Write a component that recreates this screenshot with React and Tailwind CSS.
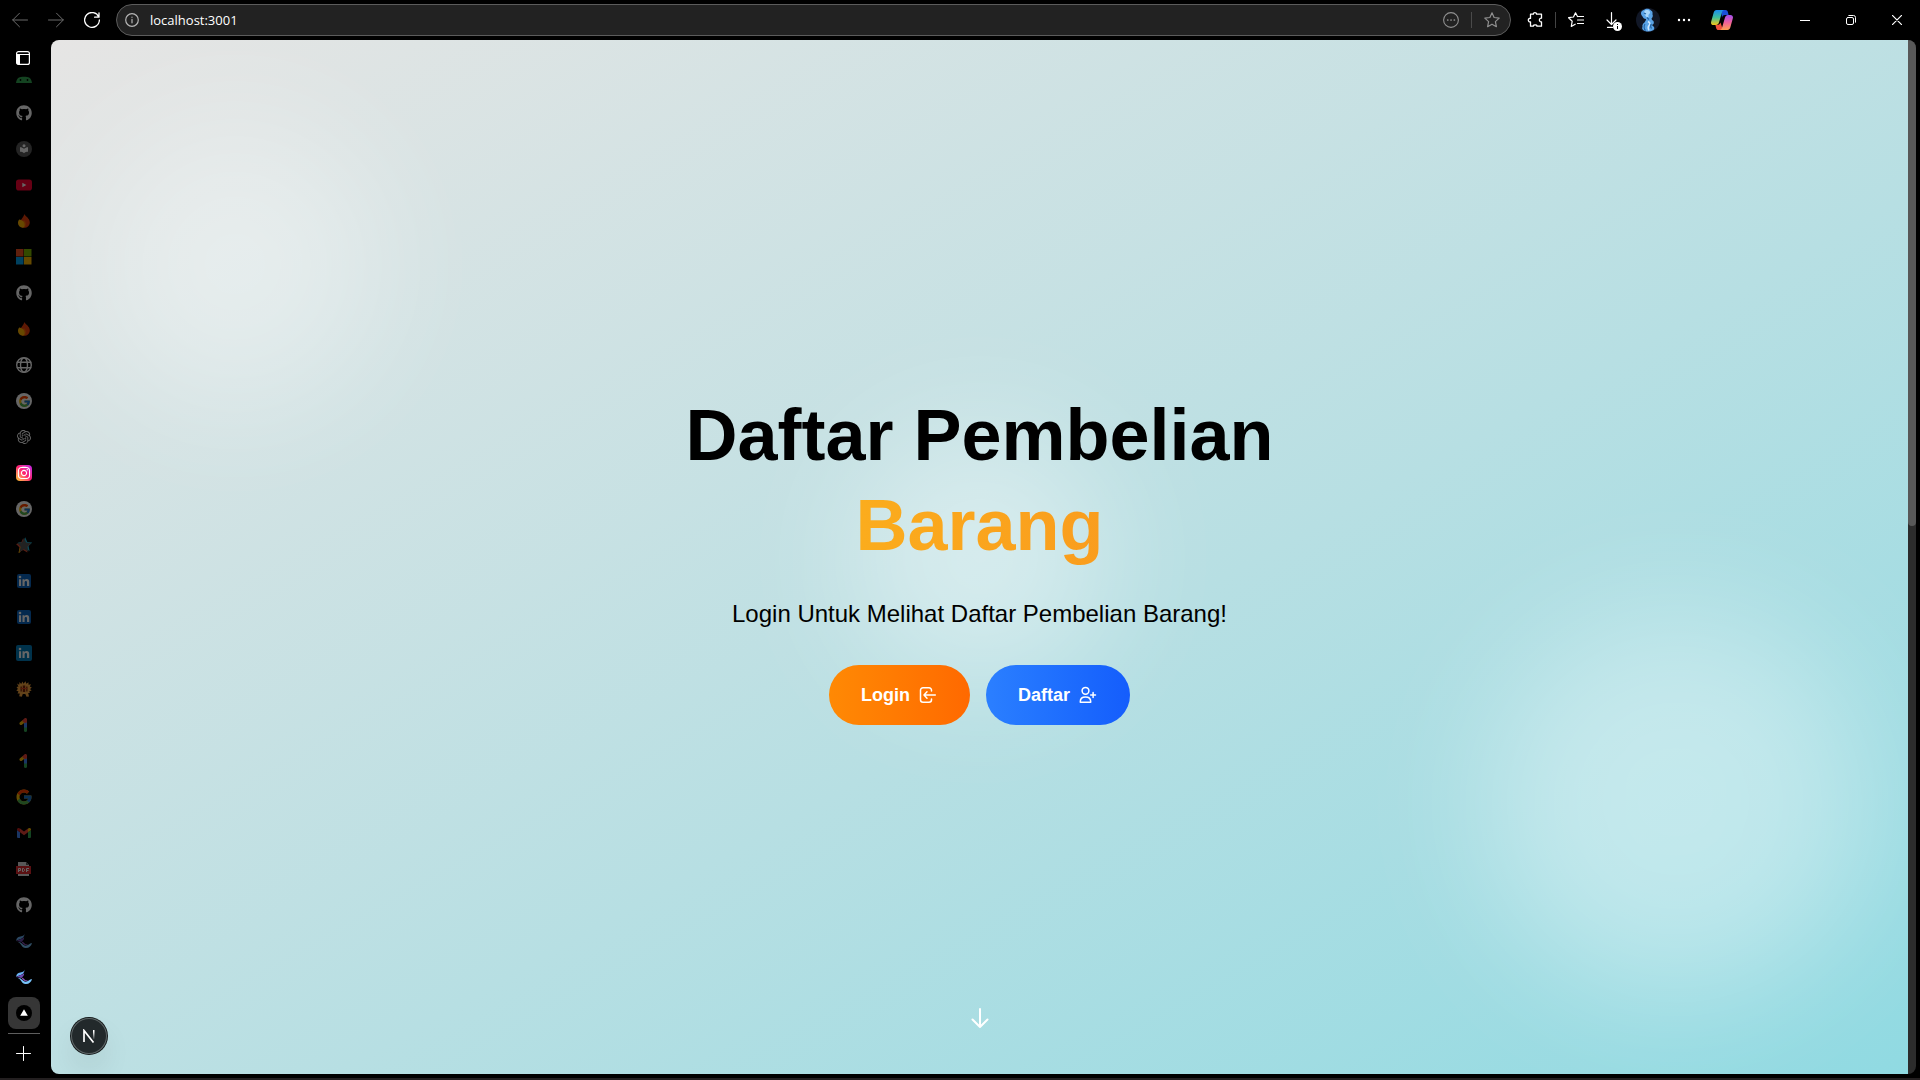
import React from "react";
import { FaGithub, FaInstagram } from "react-icons/fa";
import { FcGoogle } from "react-icons/fc";
import { SiOpenai } from "react-icons/si";

const Line = ({ size = 16, width = 1, box = 16, children, className = "" }) => (
  <svg
    width={size}
    height={size}
    viewBox={`0 0 ${box} ${box}`}
    fill="none"
    stroke="currentColor"
    strokeWidth={width}
    strokeLinecap="round"
    strokeLinejoin="round"
    className={className}
    aria-hidden="true"
  >
    {children}
  </svg>
);

const STAR = "M8 .8l2.1 4.7 5.1.6-3.8 3.5 1 5.1L8 12.2l-4.4 2.5 1-5.1L.8 6.1l5.1-.6z";

/* ---------- tab icons ---------- */

const Android = () => (
  <svg width="16" height="16" viewBox="0 0 16 16" aria-hidden="true">
    <path d="M0 14c.4-3 1.400-4.600 3-5.500C4.500 7.500 11.500 7.500 13 8.500c1.600.9 2.600 2.500 3 5.500z" fill="#34a853" />
    <circle cx="4.500" cy="11" r=".9" fill="#000" />
    <circle cx="11.500" cy="11" r=".9" fill="#000" />
  </svg>
);

const Reader = () => (
  <svg width="16" height="16" viewBox="0 0 16 16" aria-hidden="true">
    <circle cx="8" cy="8" r="8" fill="#5a5a5a" />
    <circle cx="8" cy="4.700" r="1.500" fill="#fff" />
    <path d="M4 6.200C5.500 6.200 7 6.800 8 7.800c1-1 2.500-1.600 4-1.600v4.600c-1.500 0-3 .5-4 1.400-1-.9-2.500-1.400-4-1.400z" fill="#fff" />
  </svg>
);

const Youtube = () => (
  <svg width="16" height="16" viewBox="0 0 16 16" aria-hidden="true">
    <rect x="0" y="2.500" width="16" height="11" rx="2.800" fill="#ff0033" />
    <path d="M6.300 5.800v4.400L10.400 8z" fill="#fff" />
  </svg>
);

const Flame = () => (
  <svg width="16" height="16" viewBox="0 0 16 16" aria-hidden="true">
    <path d="M8.200 1c.8 2 5.600 4.200 5.600 8.400 0 3-2.400 5.400-5.600 5.400-3 0-4.600-2.600-4.200-5.400.4-3 3.600-4.400 4.200-8.400z" fill="#e8400c" />
    <path d="M3.200 6.500c3.400.4 5.600 2.800 5.800 5.200 0 1.600-.6 2.400-1.600 2.900C4.200 14.900 2 12.800 2 10c0-1.500.5-2.500 1.200-3.500z" fill="#ffb300" />
    <path d="M8.400 14.700c2.300-2.200 2-6.200-.9-8 .4 3.200.3 5.600.9 8z" fill="#ff7a00" opacity=".6" />
  </svg>
);

const Windows = () => (
  <svg width="16" height="16" viewBox="0 0 16 16" aria-hidden="true">
    <path fill="#f25022" d="M0 0h7.500v7.500H0z" />
    <path fill="#7fba00" d="M8 0h7.500v7.500H8z" />
    <path fill="#00a4ef" d="M0 8h7.500v7.500H0z" />
    <path fill="#ffb900" d="M8 8h7.500v7.500H8z" />
  </svg>
);

const Globe = () => (
  <Line width={1.4} className="text-white">
    <circle cx="8" cy="8" r="7.300" />
    <ellipse cx="8" cy="8" rx="3.500" ry="7.300" />
    <path d="M1.300 5.300h13.400M1.300 10.700h13.400" />
  </Line>
);

const GoogleBadge = () => (
  <span className="flex size-4 items-center justify-center rounded-full bg-white">
    <FcGoogle size={13} />
  </span>
);

const Instagram = () => (
  <span className="flex size-4 items-center justify-center rounded-sm bg-linear-to-bl from-[#c010e8] via-[#ff1a70] to-[#ffc400] text-white">
    <FaInstagram size={14} />
  </span>
);

const Star = () => (
  <svg width="16" height="16" viewBox="0 0 16 16" aria-hidden="true">
    <path d={STAR} fill="#19b5d8" transform="translate(1.200 -.6)" />
    <path d={STAR} fill="#e2482d" transform="translate(-1 .8)" />
    <path d="M4 9.500l1.500 1.500-1.500 4.500-1.500.5z" fill="#f5b400" />
    <path d={STAR} fill="#555" />
  </svg>
);

const InGlyph = () => (
  <svg width="12" height="12" viewBox="0 0 12 12" fill="#fff" aria-hidden="true">
    <circle cx="2" cy="2" r="1.300" />
    <path d="M1 4.200h2.100V11H1zM4.500 4.200h2v1c.5-.8 1.200-1.200 2.200-1.200 1.800 0 2.500 1.200 2.500 3V11H9V7.500c0-1-.3-1.600-1.100-1.600S6.600 6.500 6.600 7.500V11H4.500z" />
  </svg>
);

const LinkedIn = () => (
  <span className="flex size-3.5 items-center justify-center rounded-xs bg-[#0a66c2]">
    <InGlyph />
  </span>
);

const LinkedInSquare = () => (
  <span className="flex size-4 items-center justify-center rounded-xs bg-[#007ebb]">
    <InGlyph />
  </span>
);

const Creature = () => (
  <svg width="16" height="16" viewBox="0 0 16 16" aria-hidden="true">
    <path
      d="M1 2.500l2.200 1.200L3.500 1l1.700 2L6.500.5l1 2.300L9.500.3l.8 2.500 2.200-1.600v2.500l2.500-.4-1.200 2.300 2 .8-1.700 1.500 1.500 1.800-2.200.2.400 2.200-1.600-.2.800 3.500-2.500.4-1.200-2.800H6.800l-1 2.800-2.600-.6.600-2.800-2.300.2 1-2L.3 9.500l1.600-1.600L.5 6l2-.6z"
      fill="#f5a540"
    />
    <path d="M4.500 5.500h1.300v5H4.500zM10.200 5.500h1.300v5h-1.300zM6.800 4.500h2.400v6.500H6.800z" fill="#7a2408" />
    <path d="M5 7.500h6" stroke="#d8401c" strokeWidth="1" />
  </svg>
);

const One = () => (
  <svg width="16" height="16" viewBox="0 0 16 16" fill="none" strokeLinecap="round" aria-hidden="true">
    <path d="M9.500 13.500V9" stroke="#34a853" strokeWidth="3" />
    <path d="M9.500 10.500V4" stroke="#4285f4" strokeWidth="3" strokeLinecap="butt" />
    <path d="M5 6.500l2.500-2" stroke="#fbbc04" strokeWidth="3" />
    <path d="M8 3.800l1.500-1.300v2" stroke="#ea4335" strokeWidth="3" strokeLinejoin="round" />
  </svg>
);

const Gmail = () => (
  <svg width="14" height="14" viewBox="0 0 14 14" aria-hidden="true">
    <path d="M0 4l3 2.200V12H1a1 1 0 0 1-1-1z" fill="#4285f4" />
    <path d="M14 4l-3 2.200V12h2a1 1 0 0 0 1-1z" fill="#34a853" />
    <path d="M3 2.500L7 5.600l4-3.100v3.700L7 9.300 3 6.200z" fill="#ea4335" />
    <path d="M0 3.500C0 1.800 1.800 1.500 3 2.500v3.700L0 4z" fill="#c5221f" />
    <path d="M14 3.500c0-1.700-1.800-2-3-1v3.700L14 4z" fill="#fbbc04" />
  </svg>
);

const Pdf = () => (
  <svg width="16" height="16" viewBox="0 0 16 16" aria-hidden="true">
    <path d="M2 1h8l3 3v11H2z" fill="#ddd" />
    <path d="M10 1l3 3h-3z" fill="#555" />
    <path d="M0 5h15v8H0z" fill="#e0282d" />
    <path
      d="M2.500 11V7.500h2v2h-2M6.500 7.500v3h1l1-1v-1l-1-1zM10.500 11V7.500h2.500M10.500 9.500h2"
      fill="none"
      stroke="#fff"
      strokeWidth="1"
    />
  </svg>
);

const Swirl = () => (
  <svg width="16" height="16" viewBox="0 0 16 16" fill="none" aria-hidden="true">
    <path d="M8.500.5C8 3.500 5 3.200 2.500 4 .8 4.600 0 6.500.4 8 2.500 5.500 8.500 7 8.500.5z" fill="#6bb2f5" />
    <path d="M.5 8.500C3 5.500 7 6.500 8 4c.6 3-1.500 3.500-2.500 5C3.500 8.500 2 8 .5 8.500z" fill="#6d4bb0" />
    <path d="M2 9c4-.5 5 4.500 8.500 3.500C13 11.800 13 10.500 16 10c-.6 3-3 5.200-6.500 5C5.500 14.800 5.500 10.500 2 9z" fill="#79c3fb" />
    <path d="M5.500 8.500c3 .2 3 3.800 6.500 2.600-1 2-5 1.500-6.500-2.600z" fill="#8a4fb8" />
  </svg>
);

const Github = () => <FaGithub size={16} color="#fff" />;

const tabs = [
  { name: "Android", icon: Android },
  { name: "GitHub", icon: Github },
  { name: "Reader", icon: Reader },
  { name: "YouTube", icon: Youtube },
  { name: "Firebase", icon: Flame },
  { name: "Microsoft", icon: Windows },
  { name: "GitHub", icon: Github },
  { name: "Firebase", icon: Flame },
  { name: "Web", icon: Globe },
  { name: "Google", icon: GoogleBadge },
  { name: "ChatGPT", icon: () => <SiOpenai size={14} color="#fff" /> },
  { name: "Instagram", icon: Instagram, bright: true },
  { name: "Google", icon: GoogleBadge },
  { name: "Star", icon: Star },
  { name: "LinkedIn", icon: LinkedIn },
  { name: "LinkedIn", icon: LinkedIn },
  { name: "LinkedIn", icon: LinkedInSquare },
  { name: "Game", icon: Creature },
  { name: "Google One", icon: One },
  { name: "Google One", icon: One },
  { name: "Google", icon: () => <FcGoogle size={18} /> },
  { name: "Gmail", icon: Gmail },
  { name: "PDF", icon: Pdf },
  { name: "GitHub", icon: Github },
  { name: "Swirl", icon: Swirl },
  { name: "Swirl", icon: Swirl, bright: true },
];

/* ---------- browser bar ---------- */

const BarButton = ({ label, className = "w-9", children }) => (
  <button type="button" aria-label={label} className={`flex h-8 shrink-0 items-center justify-center ${className}`}>
    {children}
  </button>
);

const Copilot = () => (
  <svg width="22" height="20" viewBox="0 0 22 20" aria-hidden="true">
    <defs>
      <linearGradient id="cpA" x1="0" y1="0" x2="0" y2="1">
        <stop offset="0" stopColor="#1a8cf0" />
        <stop offset=".5" stopColor="#3fbf9a" />
        <stop offset="1" stopColor="#f5c518" />
      </linearGradient>
      <linearGradient id="cpB" x1="0" y1="0" x2="0" y2="1">
        <stop offset="0" stopColor="#a04ff0" />
        <stop offset=".5" stopColor="#f0609a" />
        <stop offset="1" stopColor="#ffa050" />
      </linearGradient>
    </defs>
    <path d="M10 0h4.500c1.300 0 2 .8 2.300 1.800L17.600 5H14c-2 0-2.500 1-3 2.500z" fill="#1a4fd8" />
    <path d="M5.500 0h8c-1.500 0-2.200 1.200-2.600 2.500L8 12.500C7.500 14 6.500 15 5 15H2.500C.5 15-.4 13.500.2 11.500l2.500-9C3.200 1 4 0 5.500 0z" fill="url(#cpA)" />
    <path d="M12 20H7.500c-1.300 0-2-.8-2.300-1.800L4.400 15H6c2 0 3-1 3.500-2.500z" fill="#f0503c" />
    <path d="M16.500 20h-8c1.500 0 2.200-1.200 2.600-2.500L14 7.500C14.500 6 15.500 5 17 5h2.500c2 0 2.900 1.500 2.300 3.500l-2.500 9c-.5 1.500-1.300 2.500-2.800 2.500z" fill="url(#cpB)" />
  </svg>
);

const Avatar = () => (
  <svg width="24" height="24" viewBox="0 0 24 24" aria-hidden="true">
    <circle cx="12" cy="12" r="12" fill="#111726" />
    <path
      d="M5.500 3.500C7 1.500 8.500 2 9.500 1c2-.5 4.500 0 5.500 1.500 2 1 1.500 2.500 1.500 4 .8 1.500 0 3-1 4l.5 1.500c2 .5 2.200 2.500 1.500 4l-1.500 1 2 2c.8 1.500 0 3-1.500 3.500-2 1.200-5 1.300-7.500.5C6.500 22 5.500 20.500 6.500 19c-.5-2 .5-3.500 2-4.500.8-1.500 1.500-2 1.500-3.500C8 11 7 9.500 6.500 8.500 5 7 4.500 5 5.500 3.500z"
      fill="#5aa4e8"
    />
    <path d="M9 2.500c2-1 4.500-.5 5 1.500s-2 2-1.500 4-1.500 2-2.500.5S7 4 9 2.500z" fill="#a9d8fb" />
    <path d="M12 13.500c2 1 2.500 2.500 1 4s-1 3 0 5" stroke="#cfe9ff" strokeWidth="1.500" fill="none" />
    <path d="M9 16c-1.500 2-1 5 .5 6.500M11 9.500l2 2M15.500 16c-1 1-1 3 0 4.500M8 5l2 1" stroke="#1f5f9e" strokeWidth="1.100" fill="none" />
  </svg>
);

const BrowserBar = () => (
  <header className="flex h-10 shrink-0 items-center pl-0.5 text-white">
    <BarButton label="Back">
      <Line className="text-[#6b6b6b]"><path d="M15.500 8H.7M7.500 1.200L.7 8l6.800 6.800" /></Line>
    </BarButton>
    <BarButton label="Forward">
      <Line className="text-[#6b6b6b]"><path d="M.5 8h14.800M8.500 1.200L15.300 8l-6.800 6.800" /></Line>
    </BarButton>
    <BarButton label="Reload">
      <Line width={1.300}><path d="M14.800 5A7.400 7.400 0 1 0 15.400 8M15 .8v4.400h-4.400" /></Line>
    </BarButton>
    <div className="mr-1 ml-1.5 flex h-8 min-w-0 flex-1 items-center rounded-full border border-[#5c5c5c] bg-[#222222] pl-2 text-[#b5b5b5]">
      <button type="button" aria-label="Site information" className="shrink-0">
        <Line size={14} box={14} width={1.200}>
          <circle cx="7" cy="7" r="6.300" />
          <path d="M7 6.400v3.400M7 4.200v.1" />
        </Line>
      </button>
      <label htmlFor="address" className="sr-only">Address</label>
      <input
        id="address"
        type="text"
        defaultValue="localhost:3001"
        className="ml-2 h-7 min-w-0 flex-1 bg-transparent px-[3px] font-['Open_Sans',sans-serif] text-[13px] leading-7 text-white outline-none"
      />
      <button type="button" aria-label="Options" className="flex w-10 shrink-0 justify-center text-[#909090]">
        <Line width={1.100}>
          <circle cx="8" cy="8" r="7.400" />
          <path d="M4.700 8h.1M8 8h.1M11.300 8h.1" strokeWidth="1.700" />
        </Line>
      </button>
      <span className="h-4 w-px shrink-0 bg-[#4a4a4a]" />
      <button type="button" aria-label="Add favorite" className="flex w-[38px] shrink-0 justify-center pl-0.5 text-[#909090]">
        <Line width={1.200}><path d={STAR} /></Line>
      </button>
    </div>
    <BarButton label="Extensions" className="w-10">
      <Line width={1.300}>
        <path d="M3.500 2.200h2.900c-.3-2 3.400-2 3.100 0h5v4c-2.800-.6-2.800 4.200 0 3.600v4.400H9.900c.4-1.900-3.900-1.900-3.500 0H3.500V9.800C.6 10.300.6 5.900 3.500 6.300z" />
      </Line>
    </BarButton>
    <span className="h-4 w-px shrink-0 bg-[#444444]" />
    <BarButton label="Favorites" className="w-10">
      <Line width={1.200}>
        <path d="M9.500 4.500L7.500.8 5.500 5l-4.900.7 3.600 3.500-.9 5.200 3.900-2.200M10.500 4.500H16M9.500 8H16M9.500 11.500H16" />
      </Line>
    </BarButton>
    <BarButton label="Downloads" className="w-[34px]">
      <span className="relative">
        <Line width={1.200}><path d="M6.500.6v11.800M2 8l4.500 4.500L11 8M2.500 15.400h5" /></Line>
        <span className="absolute top-2.5 left-2 flex size-[9px] items-center justify-center rounded-full bg-white">
          <svg width="3" height="7" viewBox="0 0 3 7" aria-hidden="true"><path d="M1.500 1v1M1.500 3v3" stroke="#000" /></svg>
        </span>
      </span>
    </BarButton>
    <BarButton label="Profile"><Avatar /></BarButton>
    <BarButton label="Settings and more">
      <Line width={2.400}><path d="M3 8h.01M8 8h.01M13 8h.01" /></Line>
    </BarButton>
    <BarButton label="Copilot" className="mr-10 w-10"><Copilot /></BarButton>
    <BarButton label="Minimize" className="w-[46px]">
      <Line size={10} box={10}><path d="M0 5.500h10" /></Line>
    </BarButton>
    <BarButton label="Restore" className="w-[46px]">
      <Line size={10} box={10}>
        <rect x=".5" y="2.500" width="7" height="7" rx="1.500" />
        <path d="M2.800.5H7.500a2 2 0 0 1 2 2v4.700" />
      </Line>
    </BarButton>
    <BarButton label="Close" className="w-[46px]">
      <Line size={10} box={10} width={1.200}><path d="M.4.4l9.200 9.200M9.600.4L.4 9.600" /></Line>
    </BarButton>
  </header>
);

const TabRail = () => (
  <nav aria-label="Tabs" className="mr-[3px] flex w-12 shrink-0 flex-col items-center text-white">
    <button type="button" aria-label="Toggle tabs" className="flex size-9 shrink-0 items-center justify-center pr-0.5">
      <svg width="14" height="14" viewBox="0 0 14 14" aria-hidden="true">
        <rect x=".6" y=".6" width="12.800" height="12.800" rx="2" fill="none" stroke="#fff" strokeWidth="1.200" />
        <path d="M0 3h14v1H0z" fill="#fff" />
        <path d="M.5 4H4v9.500H2A1.500 1.500 0 0 1 .5 12z" fill="#fff" />
      </svg>
    </button>
    <div className="flex min-h-0 flex-1 flex-col items-center justify-end overflow-hidden">
      {tabs.map(({ name, icon: Icon, bright }, i) => (
        <button key={i} type="button" aria-label={name} className="flex size-9 shrink-0 items-center justify-center">
          <span className={bright ? "opacity-100" : "opacity-40"}>
            <Icon />
          </span>
        </button>
      ))}
      <button type="button" aria-label="Current tab" className="my-0.5 flex size-8 shrink-0 items-center justify-center rounded-lg bg-[#363636]">
        <svg width="16" height="16" viewBox="0 0 16 16" aria-hidden="true">
          <circle cx="8" cy="8" r="8" fill="#000" />
          <path d="M8 4.200l3.800 6.600H4.200z" fill="#fff" />
        </svg>
      </button>
    </div>
    <span className="mt-0.5 h-px w-8 shrink-0 bg-[#5e5e5e]" />
    <button type="button" aria-label="New tab" className="flex size-10 shrink-0 items-center justify-center pr-px pb-px">
      <Line size={15} box={15}><path d="M7.500.5v14M.5 7.500h14" /></Line>
    </button>
  </nav>
);

/* ---------- page ---------- */

const LoginIcon = () => (
  <Line size={20} box={20} width={1.500}>
    <path d="M13.500 6V5.200A2.500 2.500 0 0 0 11 2.700H5a2.500 2.500 0 0 0-2.500 2.500v9.600A2.500 2.500 0 0 0 5 17.300h6a2.500 2.500 0 0 0 2.500-2.500V14" />
    <path d="M17.300 10H6.500M9 6.800L6 10l3 3.200" />
  </Line>
);

const UserPlusIcon = () => (
  <Line size={20} box={20} width={1.500}>
    <circle cx="7.500" cy="5.800" r="3.400" />
    <path d="M2.300 17.300v-.8c0-2.800 2-4.600 5.200-4.600s5.200 1.800 5.200 4.600v.8zM12.700 10h4.800M15.100 7.600v4.800" />
  </Line>
);

const Hero = () => (
  <main className="relative flex min-w-0 flex-1 flex-col items-center justify-center overflow-hidden rounded-l-lg bg-linear-to-br from-[#e6e5e4] to-[#90dae2] text-center">
    <div className="absolute top-20 left-10 size-72 rounded-full bg-white/35 blur-3xl" />
    <div className="absolute right-10 bottom-20 size-96 rounded-full bg-white/35 blur-3xl" />
    <div className="absolute top-1/2 left-1/2 size-64 -translate-1/2 rounded-full bg-white/40 blur-3xl" />

    <div className="relative flex flex-col items-center">
      <h1 className="mb-6 text-7xl leading-[90px] font-bold text-black">
        Daftar Pembelian
        <span className="block bg-linear-to-r from-[#fcb71c] to-[#f8921e] bg-clip-text text-transparent">Barang</span>
      </h1>
      <p className="mb-8 text-2xl leading-[39px] text-black">Login Untuk Melihat Daftar Pembelian Barang!</p>
      <div className="flex gap-4 text-lg font-bold text-white">
        <a href="#login" className="flex items-center gap-2 rounded-full bg-linear-to-r from-[#ff8904] to-[#ff6900] px-8 py-4">
          Login
          <LoginIcon />
        </a>
        <a href="#daftar" className="flex items-center gap-2 rounded-full bg-linear-to-r from-[#2b7fff] to-[#155dfc] px-8 py-4">
          Daftar
          <UserPlusIcon />
        </a>
      </div>
    </div>

    <div className="absolute bottom-11 left-1/2 -translate-x-1/2 text-white">
      <Line size={24} box={24} width={2}><path d="M19.500 13.500L12 21m0 0l-7.500-7.500M12 21V3" /></Line>
    </div>

    <button
      type="button"
      aria-label="Open developer tools"
      className="absolute bottom-5 left-5 flex size-9 items-center justify-center rounded-full bg-[#22292b] shadow-[inset_0_0_0_1px_#5d6566,0_0_0_1px_#15191a,0_16px_32px_-8px_rgba(0,0,0,0.24)]"
    >
      <svg width="14" height="14" viewBox="0 0 14 14" fill="none" aria-hidden="true">
        <defs>
          <linearGradient id="nFade" x1="0" y1="0" x2="0" y2="1">
            <stop offset=".2" stopColor="#fff" />
            <stop offset="1" stopColor="#fff" stopOpacity=".1" />
          </linearGradient>
        </defs>
        <path d="M2 13V1.500L11.500 13.500" stroke="#fff" strokeWidth="1.700" />
        <path d="M11 1h1.500v9H11z" fill="url(#nFade)" />
      </svg>
    </button>
  </main>
);

export default function App() {
  return (
    <div className="flex h-screen flex-col overflow-hidden border-b-2 border-[#231f20] bg-black font-['Liberation_Sans',Arial,sans-serif]">
      <BrowserBar />
      <div className="mr-1 mb-1 flex min-h-0 flex-1">
        <TabRail />
        <Hero />
        <div className="w-2 shrink-0 overflow-hidden rounded-r-lg bg-[#2c2c2c]">
          <div className="h-[47%] rounded-b-full bg-[#585858]" />
        </div>
      </div>
    </div>
  );
}
